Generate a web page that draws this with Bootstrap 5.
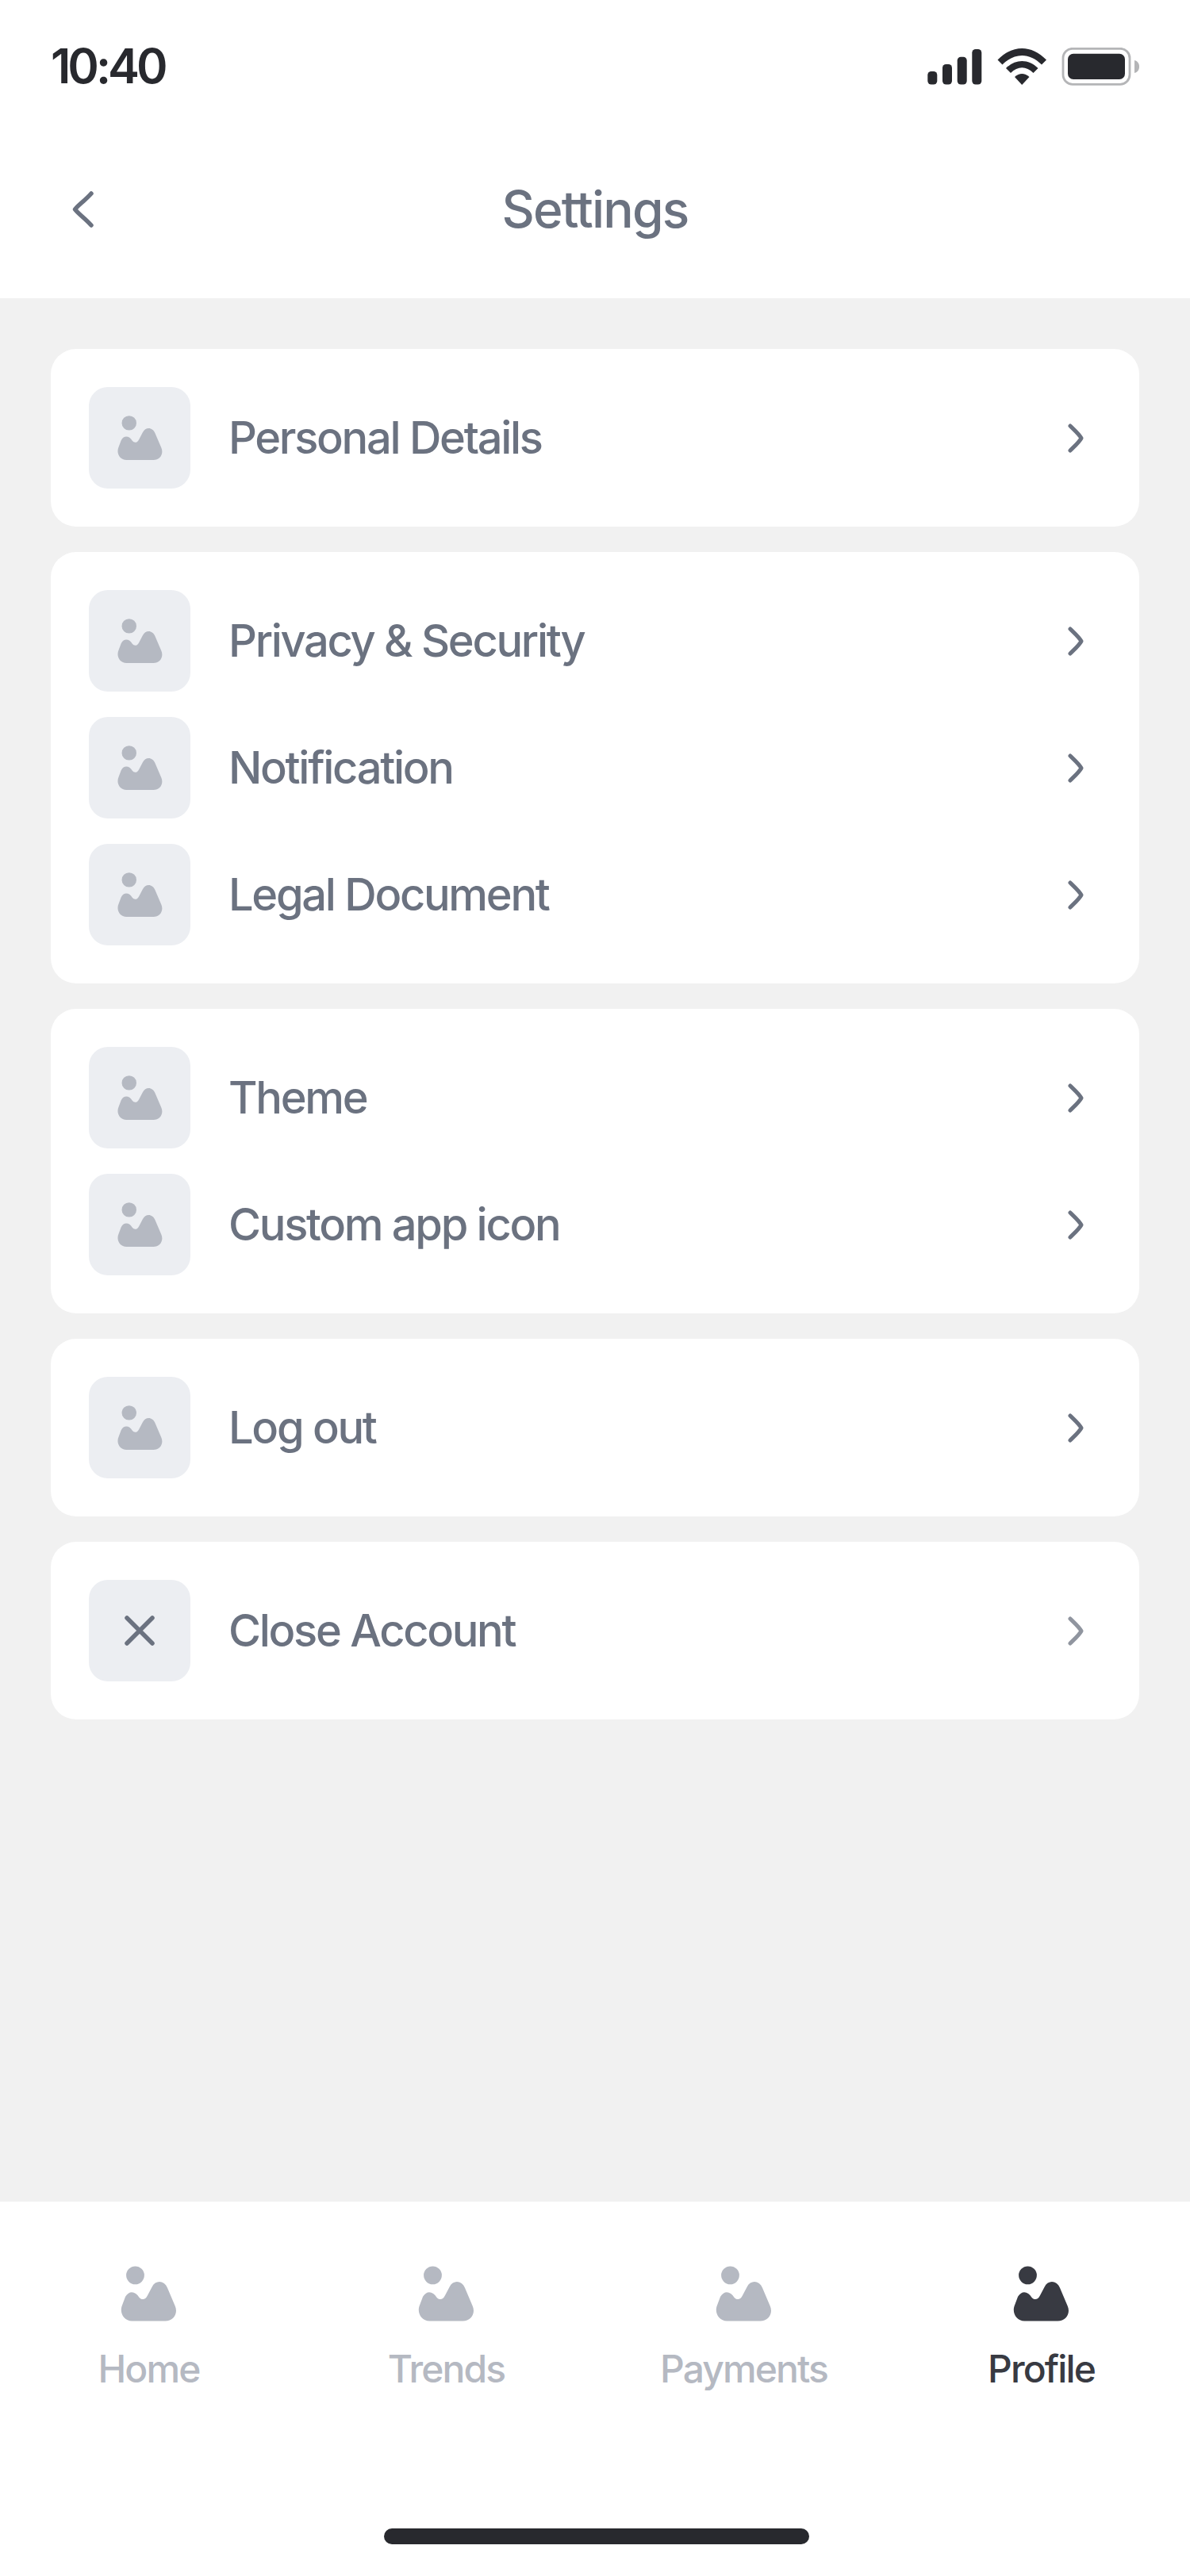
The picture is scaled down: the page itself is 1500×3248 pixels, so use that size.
<!DOCTYPE html>
<html lang="en">
<head>
<meta charset="utf-8">
<title>Settings</title>
<link rel="stylesheet" href="https://cdn.jsdelivr.net/npm/bootstrap@5.3.0/dist/css/bootstrap.min.css">
<style>
body{font-family:Inter,"Liberation Sans",sans-serif;background:#f1f1f1;height:3248px;margin:0;color:#6b7280}
.status-strip{height:168px;padding:0 64px}
.status-time{font-size:60px;font-weight:600;color:#28292e;letter-spacing:-4px;line-height:1;margin-top:-2px}
.nav-strip{height:208px;padding:0 91px 16px}
.nav-title{font-size:64px;font-weight:500;line-height:1;letter-spacing:-1.800px;margin:0;color:#6b7280}
.nav-side{width:27px}
.nav-back{width:27px;height:46px}
.settings-area{padding:64px;gap:32px}
.group-box{border-radius:32px;padding:48px;gap:32px;border:0}
.tile{width:128px;height:128px;border-radius:24px;background:#eceef2;margin-right:48px}
.tile-pic{width:59px;height:59px;fill:#b5b9c2}
.tile-x{width:38px;height:38px}
.row-label{font-size:56px;font-weight:500;line-height:1;letter-spacing:-2.300px;color:#6b7280}
.chev{width:20px;height:37px;margin-right:22px}
.tab-strip{height:472px}
.tab-cell{width:375px;padding-top:80px}
.tab-pic{width:73px;height:73px;fill:#b5b9c2}
.tab-label{font-size:48px;font-weight:500;line-height:1;letter-spacing:-1.900px;color:#b5b9c2;margin-top:34px}
.tab-on .tab-pic{fill:#383a42}
.tab-on .tab-label{color:#383a42}
.home-bar{width:536px;height:20px;border-radius:10px;background:#28292e;margin:0 0 40px 484px}
</style>
</head>
<body class="d-flex flex-column">
<svg width="0" height="0" class="position-absolute">
  <symbol id="pic" viewBox="170 158 176 176">
    <circle cx="217" cy="189" r="27.5"/>
    <path d="M207 328H308C333 328 348 305 338 282L315 228C306 204 279 202 268 224L254 251C248 264 236 265 229 256C218 237 198 234 187 254L178 278C167 302 182 328 207 328Z"/>
  </symbol>
  <symbol id="go" viewBox="0 0 20 37">
    <path d="M3 3C8 8 14 13 17 18.500C14 24 8 29 3 34" fill="none" stroke="#6b7280" stroke-width="5" stroke-linecap="round" stroke-linejoin="round"/>
  </symbol>
</svg>

<div class="status-strip bg-white d-flex justify-content-between align-items-center flex-shrink-0">
  <span class="status-time">10:40</span>
  <svg width="267" height="48" viewBox="1169 60 267 48">
    <g fill="#28292e">
      <rect x="1169.300" y="90" width="12" height="16.500" rx="4.500"/>
      <rect x="1188" y="81" width="12" height="25.500" rx="4.500"/>
      <rect x="1206.700" y="71.700" width="12" height="34.800" rx="4.500"/>
      <rect x="1225.300" y="62" width="12" height="44.500" rx="4.500"/>
      <path d="M1257.500 75.500C1276 56 1300.500 56 1319 75.500L1313 81.500C1298 66 1278.500 66 1263.500 81.500Z"/>
      <path d="M1268 86C1280 74 1296.500 74 1308.500 86L1302.500 92C1293.500 83 1283 83 1274 92Z"/>
      <path d="M1279 97C1285 91.500 1291.500 91.500 1297.500 97L1288.200 107Z"/>
    </g>
    <rect x="1340" y="61.300" width="84" height="45" rx="12" fill="none" stroke="#b4b5b7" stroke-width="2.800"/>
    <rect x="1346" y="67.700" width="72" height="32.300" rx="7" fill="#28292e"/>
    <path d="M1430 76C1434 77 1436 80 1436 84C1436 88 1434 91 1430 92Z" fill="#b4b5b7"/>
  </svg>
</div>

<div class="nav-strip bg-white d-flex justify-content-between align-items-center flex-shrink-0">
  <svg class="nav-back" viewBox="0 0 27 46"><path d="M24 3C16 12 7 18 3.500 23C7 28 16 34 24 43" fill="none" stroke="#6b7280" stroke-width="5.500" stroke-linecap="round" stroke-linejoin="round"/></svg>
  <h1 class="nav-title">Settings</h1>
  <div class="nav-side"></div>
</div>

<main class="settings-area d-flex flex-column flex-grow-1">
  <section class="group-box card d-flex flex-column">
    <div class="d-flex align-items-center"><div class="tile d-flex align-items-center justify-content-center flex-shrink-0"><svg class="tile-pic"><use href="#pic"/></svg></div><span class="row-label flex-grow-1">Personal Details</span><svg class="chev"><use href="#go"/></svg></div>
  </section>
  <section class="group-box card d-flex flex-column">
    <div class="d-flex align-items-center"><div class="tile d-flex align-items-center justify-content-center flex-shrink-0"><svg class="tile-pic"><use href="#pic"/></svg></div><span class="row-label flex-grow-1">Privacy &amp; Security</span><svg class="chev"><use href="#go"/></svg></div>
    <div class="d-flex align-items-center"><div class="tile d-flex align-items-center justify-content-center flex-shrink-0"><svg class="tile-pic"><use href="#pic"/></svg></div><span class="row-label flex-grow-1">Notification</span><svg class="chev"><use href="#go"/></svg></div>
    <div class="d-flex align-items-center"><div class="tile d-flex align-items-center justify-content-center flex-shrink-0"><svg class="tile-pic"><use href="#pic"/></svg></div><span class="row-label flex-grow-1">Legal Document</span><svg class="chev"><use href="#go"/></svg></div>
  </section>
  <section class="group-box card d-flex flex-column">
    <div class="d-flex align-items-center"><div class="tile d-flex align-items-center justify-content-center flex-shrink-0"><svg class="tile-pic"><use href="#pic"/></svg></div><span class="row-label flex-grow-1">Theme</span><svg class="chev"><use href="#go"/></svg></div>
    <div class="d-flex align-items-center"><div class="tile d-flex align-items-center justify-content-center flex-shrink-0"><svg class="tile-pic"><use href="#pic"/></svg></div><span class="row-label flex-grow-1">Custom app icon</span><svg class="chev"><use href="#go"/></svg></div>
  </section>
  <section class="group-box card d-flex flex-column">
    <div class="d-flex align-items-center"><div class="tile d-flex align-items-center justify-content-center flex-shrink-0"><svg class="tile-pic"><use href="#pic"/></svg></div><span class="row-label flex-grow-1">Log out</span><svg class="chev"><use href="#go"/></svg></div>
  </section>
  <section class="group-box card d-flex flex-column">
    <div class="d-flex align-items-center"><div class="tile d-flex align-items-center justify-content-center flex-shrink-0"><svg class="tile-x" viewBox="0 0 38 38"><path d="M3 3L35 35M35 3L3 35" fill="none" stroke="#6b7280" stroke-width="5.500" stroke-linecap="round"/></svg></div><span class="row-label flex-grow-1">Close Account</span><svg class="chev opacity-75"><use href="#go"/></svg></div>
  </section>
</main>

<footer class="tab-strip bg-white d-flex flex-column justify-content-between flex-shrink-0">
  <nav class="d-flex">
    <div class="tab-cell d-flex flex-column align-items-center"><svg class="tab-pic"><use href="#pic"/></svg><span class="tab-label">Home</span></div>
    <div class="tab-cell d-flex flex-column align-items-center"><svg class="tab-pic"><use href="#pic"/></svg><span class="tab-label">Trends</span></div>
    <div class="tab-cell d-flex flex-column align-items-center"><svg class="tab-pic"><use href="#pic"/></svg><span class="tab-label">Payments</span></div>
    <div class="tab-cell tab-on d-flex flex-column align-items-center"><svg class="tab-pic"><use href="#pic"/></svg><span class="tab-label">Profile</span></div>
  </nav>
  <div class="home-bar"></div>
</footer>
</body>
</html>
